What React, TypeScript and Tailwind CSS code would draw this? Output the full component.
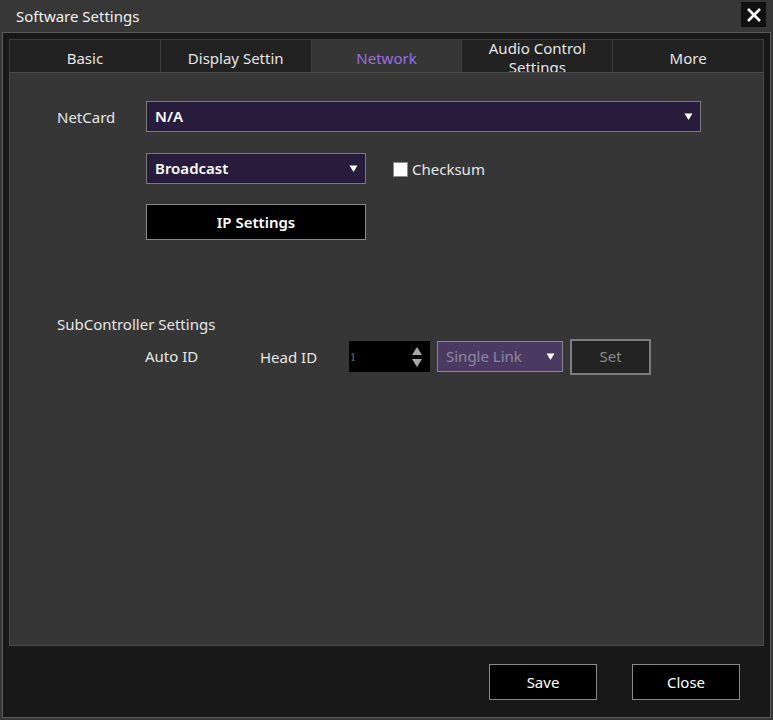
import React from "react";

const font = { fontFamily: '"Noto Sans", "Open Sans", "Liberation Sans", sans-serif' };

function Tab({ label, active, lines }: { label?: string; active?: boolean; lines?: string[] }) {
  return (
    <div
      className={`flex-1 h-full flex flex-col items-center justify-center overflow-hidden border-r border-[#3e3e3e] last:border-r-0 text-[15px] leading-[20px] ${
        active ? "bg-[#363636] text-[#9a6ee0]" : "bg-[#222222] text-[#e6e6e6]"
      }`}
    >
      {lines ? (
        <div className="flex flex-col items-center leading-[19px] pt-[4px]">
          {lines.map((l) => (
            <span key={l} className="whitespace-nowrap">{l}</span>
          ))}
        </div>
      ) : (
        <span className="pt-[3px]">{label}</span>
      )}
    </div>
  );
}

function Arrow({ color = "#ffffff" }: { color?: string }) {
  return (
    <svg width="9" height="9" viewBox="0 0 9 9">
      <polygon points="0.5,1.5 8.5,1.5 4.5,8" fill={color} />
    </svg>
  );
}

export default function App() {
  return (
    <div className="w-[773px] h-[720px] bg-[#373737] flex flex-col overflow-hidden" style={font}>
      {/* title bar */}
      <div className="h-[32px] flex items-center justify-between pl-[16px] pr-[7px] shrink-0">
        <span className="text-[15px] text-[#f0f0f0]">Software Settings</span>
        <div className="w-[25px] h-[25px] bg-[#101010] flex items-center justify-center mt-[-3px]">
          <svg width="16" height="16" viewBox="0 0 16 16">
            <path d="M2 2 L14 14 M14 2 L2 14" stroke="#ffffff" strokeWidth="2.6" />
          </svg>
        </div>
      </div>

      {/* frame */}
      <div className="flex-1 mx-[2px] mb-[2px] border border-[#5a5a5a] bg-[#181818] flex flex-col pt-[6px] px-[6px]">
        {/* tabs */}
        <div className="h-[33px] flex border border-b-0 border-[#3e3e3e] shrink-0">
          <Tab label="Basic" />
          <Tab label="Display Settin" />
          <Tab label="Network" active />
          <Tab lines={["Audio Control", "Settings"]} />
          <Tab label="More" />
        </div>

        {/* content panel */}
        <div className="h-[574px] bg-[#363636] border border-[#4a4a4a] flex flex-col pl-[47px] pt-[28px] text-[15px] text-[#e6e6e6]">
          <div className="flex items-center h-[31px]">
            <span className="w-[89px] pt-[2px]">NetCard</span>
            <div className="w-[555px] h-[31px] bg-[#281c3c] border border-[#7a7a7a] flex items-center justify-between pl-[8px] pr-[7px]">
              <span className="font-semibold text-white">N/A</span>
              <Arrow />
            </div>
          </div>

          <div className="flex items-center mt-[21px] ml-[89px]">
            <div className="w-[220px] h-[31px] bg-[#281c3c] border border-[#7a7a7a] flex items-center justify-between pl-[8px] pr-[7px]">
              <span className="font-semibold text-white">Broadcast</span>
              <Arrow />
            </div>
            <div className="ml-[27px] mt-[2px] w-[15px] h-[15px] bg-white border border-[#888]" />
            <span className="ml-[4px] pt-[2px]">Checksum</span>
          </div>

          <div className="mt-[20px] ml-[89px] w-[220px] h-[36px] bg-black border border-[#8a8a8a] flex items-center justify-center font-semibold text-white">
            IP Settings
          </div>

          <div className="mt-[73px]">SubController Settings</div>

          <div className="flex items-center mt-[3px] h-[36px]">
            <span className="ml-[88px] w-[115px]">Auto ID</span>
            <span className="w-[89px] pt-[2px]">Head ID</span>
            <div className="w-[81px] h-[31px] bg-black flex items-center justify-between pl-[1px] pr-[7px]">
              <span className="text-[12px] text-[#777]" style={{ fontFamily: '"Liberation Serif", serif' }}>1</span>
              <svg width="12" height="22" viewBox="0 0 12 22">
                <polygon points="6,1 11,9 1,9" fill="#a8a8a8" />
                <polygon points="1,13 11,13 6,21" fill="#a8a8a8" />
              </svg>
            </div>
            <div className="ml-[7px] w-[126px] h-[31px] bg-[#4a3a62] border border-[#8a8a8a] flex items-center justify-between pl-[8px] pr-[7px]">
              <span className="text-[#8f86a3]">Single Link</span>
              <Arrow />
            </div>
            <div className="ml-[7px] w-[81px] h-[36px] bg-[#232323] border-2 border-[#7d7d7d] flex items-center justify-center text-[#8a8a8a]">
              Set
            </div>
          </div>
        </div>

        {/* bottom buttons */}
        <div className="flex justify-end pr-[24px] pt-[18px] gap-[35px] text-[15px] text-white">
          <div className="w-[108px] h-[36px] bg-black border border-[#8a8a8a] flex items-center justify-center">Save</div>
          <div className="w-[108px] h-[36px] bg-black border border-[#8a8a8a] flex items-center justify-center">Close</div>
        </div>
      </div>
    </div>
  );
}
